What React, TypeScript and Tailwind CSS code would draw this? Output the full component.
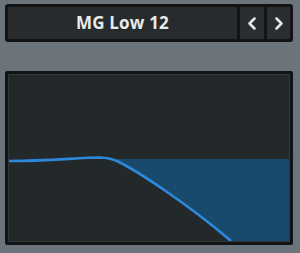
import React from 'react';

const Chevron = ({ dir }: { dir: 'left' | 'right' }) => (
  <svg width="10" height="13" viewBox="0 0 10 13" fill="none">
    <path
      d={dir === 'left' ? 'M7.5 1.5 L2.5 6.5 L7.5 11.5' : 'M2.5 1.5 L7.5 6.5 L2.5 11.5'}
      stroke="#e6e8e9"
      strokeWidth="2.5"
      strokeLinecap="round"
      strokeLinejoin="round"
    />
  </svg>
);

const FilterGraph = () => (
  <svg width="280" height="166" viewBox="0 0 280 166" className="block">
    <path
      d="M100 84 C104 84.5 106 85 110 87 C130 97 180 130 222 166 L280 166 L280 84 Z"
      fill="#194a6c"
    />
    <path
      d="M0 86 C40 86 70 82.5 91 82.5 C100 82.7 104 84 110 87 C130 97 180 130 222 166"
      fill="none"
      stroke="#2d88da"
      strokeWidth="2.7"
    />
  </svg>
);

const App = () => {
  return (
    <div
      className="w-[300px] h-[253px] bg-[#6b747b] pt-[4px] px-[5px] overflow-hidden"
      style={{ fontFamily: '"Open Sans", "Liberation Sans", sans-serif' }}
    >
      <div className="flex h-[38px] w-[288px] gap-[3px] rounded-[3px] bg-[#111314] p-[3px]">
        <div className="flex flex-1 items-center justify-center bg-[#272b2e] text-[17px] font-bold tracking-[0.2px] text-[#e8eaeb]">
          MG Low 12
        </div>
        <button className="flex w-[24px] items-center justify-center bg-[#2a2e31]">
          <Chevron dir="left" />
        </button>
        <button className="flex w-[23px] items-center justify-center bg-[#2a2e31]">
          <Chevron dir="right" />
        </button>
      </div>

      <div className="mt-[29px] h-[174px] w-[288px] rounded-[2px] border-[3px] border-[#111314]">
        <div className="h-full w-full border border-[#30363a] bg-[#23282b]">
          <FilterGraph />
        </div>
      </div>
    </div>
  );
};

export default App;
